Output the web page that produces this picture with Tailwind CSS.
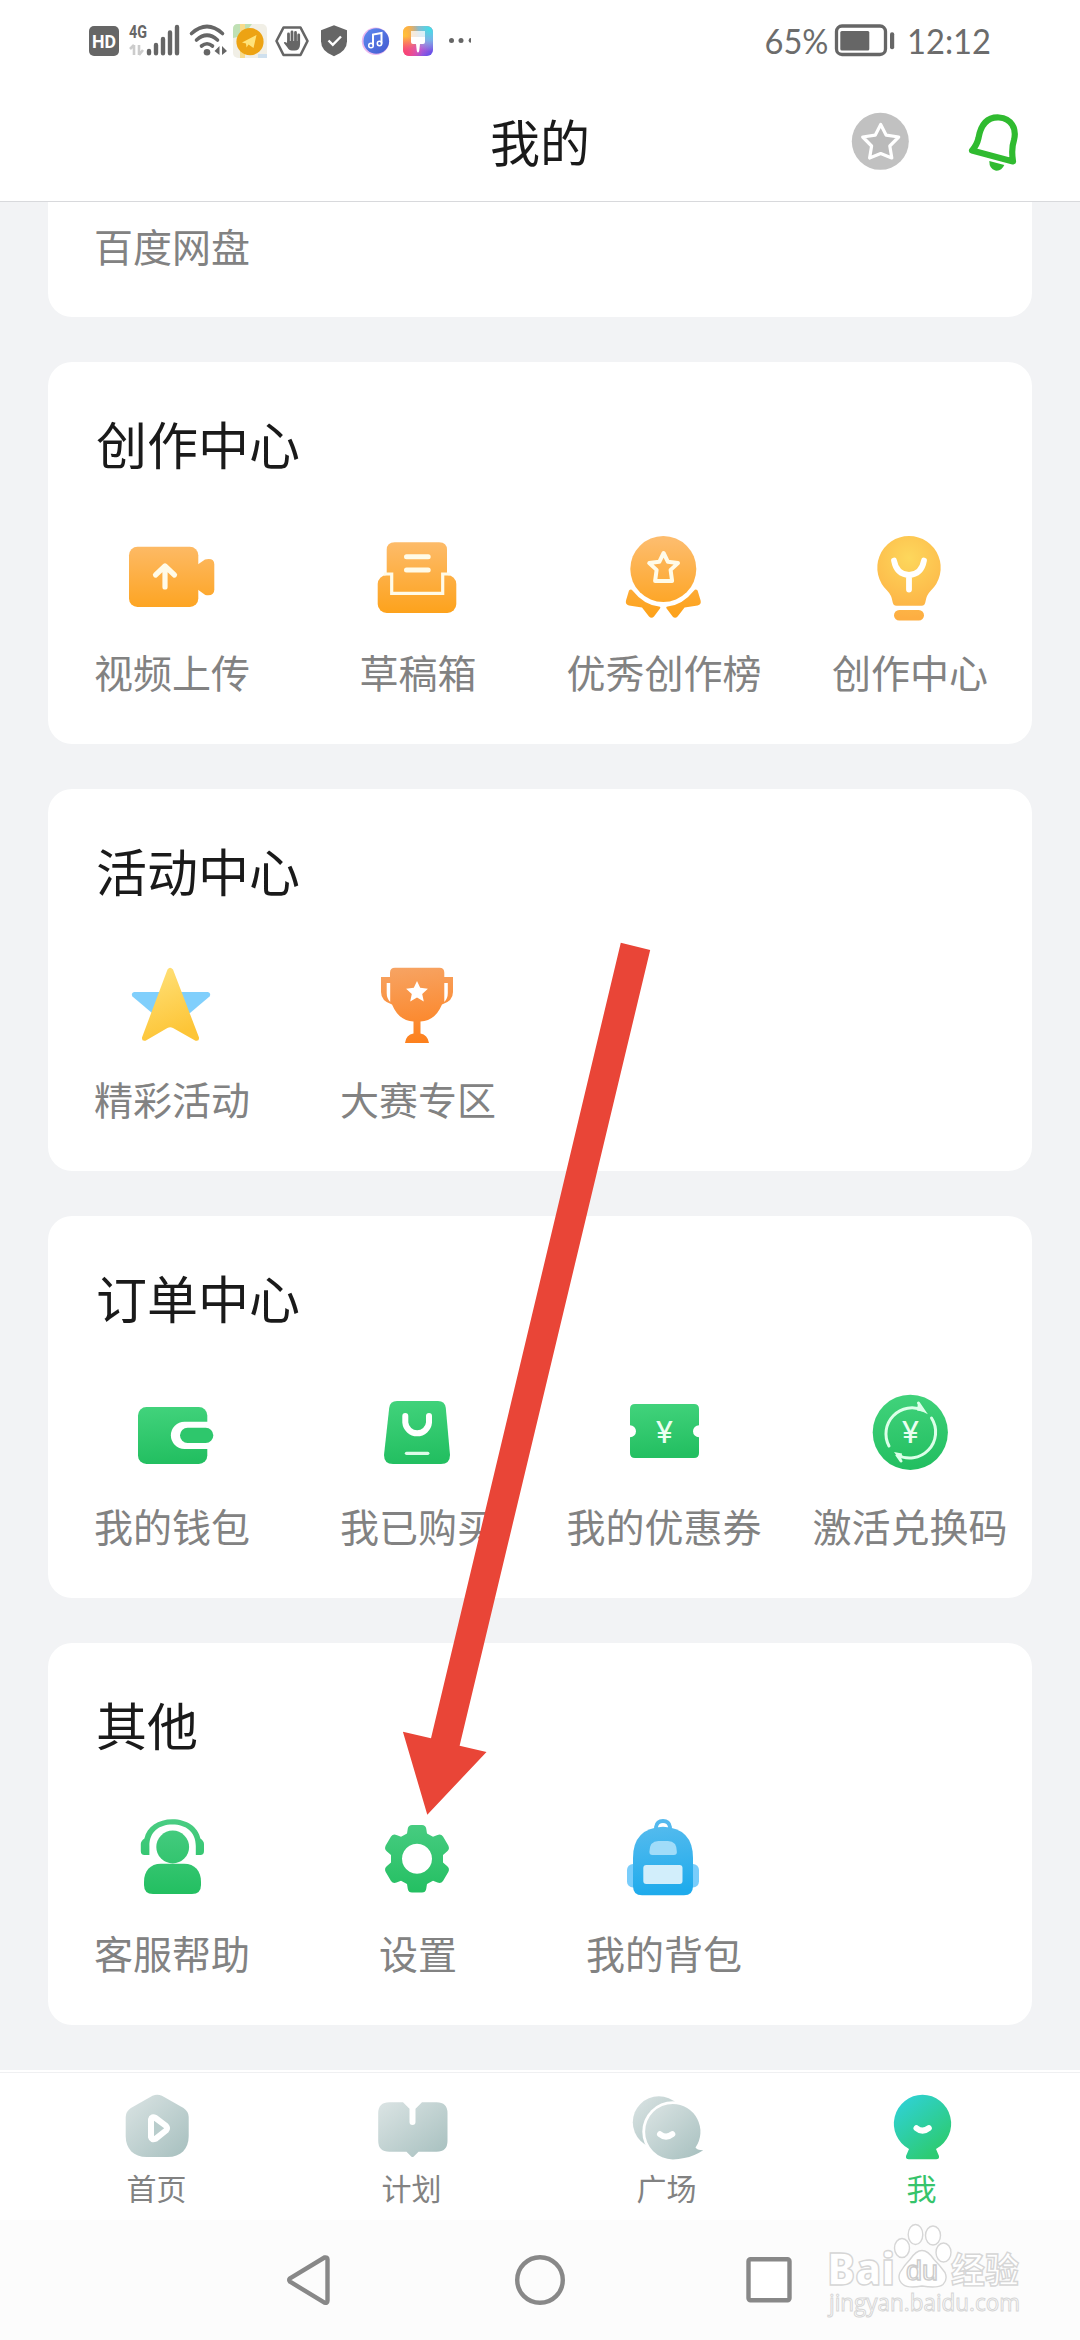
<!DOCTYPE html>
<html lang="zh-CN">
<head>
<meta charset="utf-8">
<title>我的</title>
<script src="https://cdn.jsdelivr.net/npm/@tailwindcss/browser@4"></script>
</head>
<body class="relative w-[1080px] h-[2340px] overflow-hidden bg-[#f2f3f5] flex flex-col font-['Noto_Sans_CJK_SC',sans-serif] text-[39px] text-[#828282]">

<svg class="absolute w-0 h-0">
  <defs>
    <linearGradient id="orangePage" gradientUnits="userSpaceOnUse" x1="0" y1="540" x2="0" y2="614"><stop offset="0" stop-color="#fdbc6c"/><stop offset="1" stop-color="#fda21b"/></linearGradient>
    <radialGradient id="bulb" gradientUnits="userSpaceOnUse" cx="909" cy="558" r="60"><stop offset="0" stop-color="#fdd75c"/><stop offset="1" stop-color="#fdae42"/></radialGradient>
    <linearGradient id="yellow" x1="0" y1="0" x2="0.3" y2="1"><stop offset="0" stop-color="#ffe27c"/><stop offset="1" stop-color="#fdc537"/></linearGradient>
    <linearGradient id="cup" gradientUnits="userSpaceOnUse" x1="410" y1="967" x2="420" y2="1043"><stop offset="0" stop-color="#f7a362"/><stop offset="1" stop-color="#fd801c"/></linearGradient>
    <linearGradient id="green" x1="0" y1="0" x2="0.1" y2="1"><stop offset="0" stop-color="#42d37c"/><stop offset="1" stop-color="#23bf61"/></linearGradient>
    <linearGradient id="greenPage" gradientUnits="userSpaceOnUse" x1="0" y1="1819" x2="0" y2="1894"><stop offset="0" stop-color="#4acd83"/><stop offset="1" stop-color="#23bf61"/></linearGradient>
    <linearGradient id="blue" x1="0" y1="0" x2="0.1" y2="1"><stop offset="0" stop-color="#55bbee"/><stop offset="1" stop-color="#1fabec"/></linearGradient>
    <linearGradient id="mist" x1="0" y1="0" x2="1" y2="1"><stop offset="0" stop-color="#dbe4e4"/><stop offset="1" stop-color="#a6bfbe"/></linearGradient>
    <linearGradient id="me" gradientUnits="userSpaceOnUse" x1="900" y1="2103" x2="938" y2="2150"><stop offset="0" stop-color="#2fd1d0"/><stop offset="1" stop-color="#2dcb73"/></linearGradient>
    <linearGradient id="rainbow" x1="0" y1="0" x2="1" y2="1"><stop offset="0" stop-color="#ffb03a"/><stop offset="0.35" stop-color="#f8806a"/><stop offset="0.65" stop-color="#c95ad0"/><stop offset="1" stop-color="#4c50f0"/></linearGradient>
    <radialGradient id="cyanGlow" cx="0.9" cy="0.1" r="0.75"><stop offset="0" stop-color="#3fe0e8"/><stop offset="0.5" stop-color="#62cff0" stop-opacity="0.75"/><stop offset="1" stop-color="#62cff0" stop-opacity="0"/></radialGradient>
    <radialGradient id="goldGlow" cx="0.05" cy="0.3" r="0.5"><stop offset="0" stop-color="#ffc23a"/><stop offset="1" stop-color="#ffc23a" stop-opacity="0"/></radialGradient>
    <radialGradient id="pinkGlow" cx="0.05" cy="0.95" r="0.6"><stop offset="0" stop-color="#fb3f72"/><stop offset="1" stop-color="#fb3f72" stop-opacity="0"/></radialGradient>
    <linearGradient id="music" x1="0" y1="0" x2="1" y2="1"><stop offset="0" stop-color="#5f8cf0"/><stop offset="1" stop-color="#4359cf"/></linearGradient>
  </defs>
</svg>

<header class="h-[202px] shrink-0 bg-white border-b border-[#d8d9dc] flex flex-col">
  <div class="h-[84px] flex">
    <svg class="block w-[540px] h-[84px]" viewBox="0 0 540 84">
      <rect x="89" y="26" width="30" height="30" rx="5" fill="#666"/>
      <text x="92" y="48" font-family="Roboto" font-weight="700" font-size="19" textLength="24" lengthAdjust="spacingAndGlyphs" fill="#fff">HD</text>
      <text x="129" y="38" font-family="Roboto" font-weight="700" font-size="18" textLength="18" lengthAdjust="spacingAndGlyphs" fill="#666">4G</text>
      <path d="M134 45v10M130 49l4-4M139 55V45M143 50l-4 5" stroke="#ccc" stroke-width="2.6" fill="none"/>
      <path d="M149 51v2.3M156 45v8.3M163 39v14.3M170 32.500v20.800M177 27v26.300" stroke="#666" stroke-width="4.400" stroke-linecap="round"/>
      <circle cx="207" cy="52.300" r="3.300" fill="#666"/>
      <path d="M191.500 33.500Q207 19.500 222.500 33.500M196.500 40Q207 30.500 217.500 40M201.500 46Q207 41.500 212.500 46" stroke="#666" stroke-width="3.600" stroke-linecap="round" fill="none"/>
      <path d="M219.500 46v9l-5-4zM222 46v9l5-4z" fill="#666"/>
      <rect x="233" y="24" width="34" height="34" rx="5" fill="#f1efe6"/>
      <path d="M233 29q0-5 5-5h14l-9 12-10 2z" fill="#bfe0b4"/>
      <path d="M240 24h5v34h-5z" fill="#f8dc8c"/><path d="M258 54h9v4h-9z" fill="#cfe0ee"/>
      <circle cx="250" cy="41.700" r="13.600" fill="#eda313"/>
      <path d="M242 42.500l14.500-7.500-3 13-5-3.500-2 3-.5-4z" fill="#ffe37a"/>
      <path d="M283.500 27.500h17l7 13.500-7 14h-17l-7-14z" fill="#fff" stroke="#666" stroke-width="2.600" stroke-linejoin="round"/>
      <path d="M288.500 34v8M292 32v10M295.500 32.500v9M298.700 35v9" stroke="#666" stroke-width="2.800" stroke-linecap="round"/>
      <path d="M287.200 41h12.700v5q-1 4.500-5 4.500h-3q-3 0-4.500-3l-3.500-4.500q0-2 3.300 0z" fill="#666"/>
      <path d="M334 25.300l13 5v11q0 10-13 15-13-5-13-15v-11z" fill="#666"/>
      <path d="M328.500 40.500l4.300 4.300 8.200-8.300" stroke="#fff" stroke-width="2.400" fill="none"/>
      <circle cx="375.500" cy="41.300" r="13.700" fill="#ebb8ee"/>
      <circle cx="376.300" cy="41" r="12.800" fill="url(#music)"/>
      <path d="M373 45.500V34.500l8.500-1.500v10.500" stroke="#fff" stroke-width="2" fill="none"/><circle cx="371" cy="45.500" r="2.300" fill="none" stroke="#fff" stroke-width="1.500"/><circle cx="379.500" cy="43.500" r="2.200" fill="none" stroke="#fff" stroke-width="1.500"/>
      <rect x="403" y="26" width="30" height="30" rx="6" fill="url(#rainbow)"/><rect x="403" y="26" width="30" height="30" rx="6" fill="url(#cyanGlow)"/><rect x="403" y="26" width="30" height="30" rx="6" fill="url(#goldGlow)"/><rect x="403" y="26" width="30" height="30" rx="6" fill="url(#pinkGlow)"/>
      <path d="M411 31h14v6h-14z" fill="#fff" opacity=".75"/><path d="M411 37h14v5q0 2-2 2h-3l-.8 7q-1.200 3-2.400 0l-.8-7h-3q-2 0-2-2z" fill="#fff"/>
      <circle cx="451.500" cy="40.400" r="2.500" fill="#666"/><circle cx="461" cy="40.400" r="2.500" fill="#666"/><path d="M471 38a2.400 2.400 0 0 0 0 4.800z" fill="#666"/>
    </svg>
    <svg class="block w-[540px] h-[84px]" viewBox="540 0 540 84">
      <text x="764.500" y="54" font-family="Lato" font-size="34.500" textLength="64" lengthAdjust="spacingAndGlyphs" fill="#6c6c6c">65%</text>
      <rect x="836.500" y="26" width="49" height="28.500" rx="5.500" fill="none" stroke="#666" stroke-width="3.300"/>
      <rect x="840.300" y="31" width="29" height="19.500" rx="1.500" fill="#666"/>
      <rect x="890" y="32.300" width="4.200" height="17" rx="2" fill="#666"/>
      <text x="907" y="54" font-family="Lato" font-size="34.500" textLength="84" lengthAdjust="spacingAndGlyphs" fill="#6c6c6c">12:12</text>
    </svg>
  </div>
  <div class="h-[117px] grid grid-cols-[390px_300px_390px] items-center">
    <span></span>
    <h1 class="text-center text-[50px] leading-[60px] pb-[5px] text-[#1a1a1a]">我的</h1>
    <svg class="block w-[390px] h-[117px]" viewBox="690 84 390 117">
      <circle cx="880.300" cy="141.300" r="28.500" fill="#c1c1c1"/>
      <path d="M880.700 124.500l5.500 10.700 12.500 1.800-8.900 9 2 12-11.100-4.500-11.100 4.500 2-12-8.900-9 12.500-1.800z" fill="#bababa" stroke="#fff" stroke-width="3.200" stroke-linejoin="round"/>
      <path d="M972 150.500Q977 145 978.500 138C981 124 988 117 999 117.500 1011 118.500 1017 128 1014 140Q1011 149 1013 161.500z" fill="none" stroke="#30bb30" stroke-width="6.200" stroke-linejoin="round"/>
      <path d="M989.300 161l15 4q-3 6.500-9 5.500-6-1.500-6-9.500z" fill="#30bb30"/>
    </svg>
  </div>
</header>

<main class="h-[1868px] shrink-0 px-12 flex flex-col gap-[45px]">
  <section class="h-[115px] shrink-0 bg-white rounded-b-3xl grid grid-cols-4">
    <span class="text-center pt-[14px] pl-[2px] leading-[58px]">百度网盘</span>
  </section>

  <section class="h-[382px] shrink-0 bg-white rounded-3xl flex flex-col pt-[46px]">
    <h2 class="pl-[48px] text-[51px] leading-[70px] text-[#1a1a1a]">创作中心</h2>
    <div class="grid grid-cols-4 pt-[52px]">
      <div class="flex flex-col items-center gap-[16px]">
        <svg class="w-24 h-24 overflow-visible" viewBox="123 530 96 96"><g fill="url(#orangePage)"><rect x="129" y="546.700" width="69.300" height="60.300" rx="8.500"/><path d="M197 565l8-5.500q9.300-2 9.300 5v25q0 7-9 5.500l-8.300-6z"/></g><path d="M165 587v-21M155.500 575l9.500-9 9.500 9" stroke="#fffbe8" stroke-width="5.200" fill="none" stroke-linecap="round" stroke-linejoin="round"/></svg>
        <span class="whitespace-nowrap pl-[2px] leading-[58px]">视频上传</span>
      </div>
      <div class="flex flex-col items-center gap-[16px]">
        <svg class="w-24 h-24 overflow-visible" viewBox="369 530 96 96"><g fill="url(#orangePage)"><rect x="377.700" y="575" width="78.600" height="38" rx="9"/><path d="M386.700 550q0-7.700 8-7.700h44.500q7.800 0 7.800 7.700v43h-60.300z"/></g><path d="M384 574h7.700v19.300h51V574h7" stroke="#fffbe8" stroke-width="3.200" fill="none"/><path d="M406.500 556.700h21.700M406.500 570h21.700" stroke="#fffbe8" stroke-width="5" stroke-linecap="round"/></svg>
        <span class="whitespace-nowrap pl-[2px] leading-[58px]">草稿箱</span>
      </div>
      <div class="flex flex-col items-center gap-[16px]">
        <svg class="w-24 h-24 overflow-visible" viewBox="615 530 96 96"><g fill="url(#orangePage)"><circle cx="663.300" cy="569" r="33"/><path d="M629 590.500q2-2 3.500 0Q644 605 659 606.500q2 0 1 2l-6 8q-2.500 2.500-5 0l-7-9-13-2q-4-1-3-5z"/><path d="M697.600 590.500q-2-2-3.500 0-11.500 14.500-26.500 16-2 0-1 2l6 8q2.500 2.500 5 0l7-9 13-2q4-1 3-5z"/></g><path d="M663.600 553l4.300 8.800 10.100 1.300-7.400 6.800 1.500 11.200h-17l1.500-11.200-7.400-6.800 10.100-1.300z" fill="none" stroke="#fffbe8" stroke-width="4" stroke-linejoin="round"/></svg>
        <span class="whitespace-nowrap pl-[2px] leading-[58px]">优秀创作榜</span>
      </div>
      <div class="flex flex-col items-center gap-[16px]">
        <svg class="w-24 h-24 overflow-visible" viewBox="861 530 96 96"><g fill="url(#bulb)"><path d="M909 536a31.700 31.700 0 0 1 21.500 55q-4 4-5 10.500-.5 4.200-4 4.200h-25q-3.500 0-4-4.200-1-6.500-5-10.500A31.700 31.700 0 0 1 909 536z"/><rect x="894" y="610" width="30" height="10.500" rx="5.200"/></g><path d="M894 560.500q2.500 14 15 14.500 12.500-.5 15-14.500M909 575v14.500" stroke="#fff" stroke-width="5.800" fill="none" stroke-linecap="round"/></svg>
        <span class="whitespace-nowrap pl-[2px] leading-[58px]">创作中心</span>
      </div>
    </div>
  </section>

  <section class="h-[382px] shrink-0 bg-white rounded-3xl flex flex-col pt-[46px]">
    <h2 class="pl-[48px] text-[51px] leading-[70px] text-[#1a1a1a]">活动中心</h2>
    <div class="grid grid-cols-4 pt-[52px]">
      <div class="flex flex-col items-center gap-[16px]">
        <svg class="w-24 h-24 overflow-visible" viewBox="123 957 96 96"><path d="M134 992h74q3.500 1.500 1.500 4.500L190 1013h-38l-19.500-16.500q-2-3 1.500-4.500z" fill="#80cffc"/><path d="M167.500 969.500q2.500-3.500 5.500 0L199 1037.500q.5 4-3.500 3.200L173 1028q-2.800-1.500-5.600 0L145.500 1040.700q-4 .8-3.500-3.200z" fill="url(#yellow)"/></svg>
        <span class="whitespace-nowrap pl-[2px] leading-[58px]">精彩活动</span>
      </div>
      <div class="flex flex-col items-center gap-[16px]">
        <svg class="w-24 h-24 overflow-visible" viewBox="369 957 96 96"><g fill="url(#cup)"><path d="M395 967.700h44.500q4.800 0 4.800 5v4.300h8.700v15q0 9-11 12.500-7 16.500-21.500 17v12q7 1 8.500 9.500h-24q1-8.500 8.500-9.500v-12q-14.500-.5-21.500-17-11-3.500-11-12.500v-15h9v-4.300q0-5 5-5z"/></g><path d="M386.700 983h3.500v19q-3.500-3.500-3.500-9zM447.800 983h-3.500v19q3.500-3.500 3.500-9z" fill="#fff"/><path d="M417 981l3.200 6.800 7.700.9-5.700 5.200 1.600 7.600-6.800-3.900-6.800 3.900 1.600-7.600-5.700-5.200 7.700-.9z" fill="#fff"/></svg>
        <span class="whitespace-nowrap pl-[2px] leading-[58px]">大赛专区</span>
      </div>
    </div>
  </section>

  <section class="h-[382px] shrink-0 bg-white rounded-3xl flex flex-col pt-[46px]">
    <h2 class="pl-[48px] text-[51px] leading-[70px] text-[#1a1a1a]">订单中心</h2>
    <div class="grid grid-cols-4 pt-[52px]">
      <div class="flex flex-col items-center gap-[16px]">
        <svg class="w-24 h-24 overflow-visible" viewBox="123 1384 96 96"><rect x="138" y="1407" width="69.300" height="57" rx="8.500" fill="url(#green)"/><path d="M208.500 1421.700H184.500a13.600 13.600 0 0 0 0 27.300h24z" fill="#fff"/><rect x="180" y="1427.700" width="33.300" height="15.300" rx="7.600" fill="#2ec76c"/></svg>
        <span class="whitespace-nowrap pl-[2px] leading-[58px]">我的钱包</span>
      </div>
      <div class="flex flex-col items-center gap-[16px]">
        <svg class="w-24 h-24 overflow-visible" viewBox="369 1384 96 96"><path d="M397 1401h41q7 0 7.800 7L450 1455q0 9-9 9h-48q-9 0-9-9l5.200-47q.8-7 7.800-7z" fill="url(#green)"/><path d="M405.300 1416v6.500a11.900 11.900 0 0 0 23.700 0V1416" stroke="#fff" stroke-width="6" fill="none" stroke-linecap="round"/><path d="M406.500 1453.300h21.300" stroke="#ddfbe9" stroke-width="3.300" stroke-linecap="round"/></svg>
        <span class="whitespace-nowrap pl-[2px] leading-[58px]">我已购买</span>
      </div>
      <div class="flex flex-col items-center gap-[16px]">
        <svg class="w-24 h-24 overflow-visible" viewBox="615 1384 96 96"><path d="M635 1404h59q5 0 5 5v16.300a6 6 0 0 0 0 12V1453q0 5-5 5h-59q-5 0-5-5v-15.700a6 6 0 0 0 0-12V1409q0-5 5-5z" fill="url(#green)"/><text x="664.500" y="1442.500" text-anchor="middle" font-family="Roboto" font-size="32" fill="#e9fff1">¥</text></svg>
        <span class="whitespace-nowrap pl-[2px] leading-[58px]">我的优惠券</span>
      </div>
      <div class="flex flex-col items-center gap-[16px]">
        <svg class="w-24 h-24 overflow-visible" viewBox="861 1384 96 96"><circle cx="910.300" cy="1432.300" r="37.600" fill="url(#green)"/><path d="M889 1446A26 26 0 0 1 923.500 1410.500L918.500 1403M931.500 1418A26 26 0 0 1 896.500 1454.500L901 1461" stroke="#dcffe9" stroke-width="3" fill="none" stroke-linecap="round"/><path d="M918 1402.500l7 9.500-8-1.500zM901 1461.500l-7-9.500 8 1.500z" fill="#dcffe9"/><text x="910.300" y="1442.500" text-anchor="middle" font-family="Roboto" font-size="32" fill="#e9fff1">¥</text></svg>
        <span class="whitespace-nowrap pl-[2px] leading-[58px]">激活兑换码</span>
      </div>
    </div>
  </section>

  <section class="h-[382px] shrink-0 bg-white rounded-3xl flex flex-col pt-[46px]">
    <h2 class="pl-[48px] text-[51px] leading-[70px] text-[#1a1a1a]">其他</h2>
    <div class="grid grid-cols-4 pt-[52px]">
      <div class="flex flex-col items-center gap-[16px]">
        <svg class="w-24 h-24 overflow-visible" viewBox="123 1811 96 96"><g fill="url(#greenPage)"><circle cx="172.700" cy="1847" r="16.400"/><path d="M144 1882c0-11 6-18.300 17-18.300h23c11 0 17 7.300 17 18.300v3q0 9-9 9h-39q-9 0-9-9z"/><path d="M149.400 1855h-5q-3.600 0-3.600-4v-7q0-3 3.600-5.500C147 1827 158 1819.300 172.400 1819.300S198 1827 200.400 1838.500q3.600 2.500 3.600 5.500v7q0 4-3.600 4h-4.600v-9C195.800 1832 186 1824.500 172.400 1824.500S149.400 1832 149.400 1846z"/></g></svg>
        <span class="whitespace-nowrap pl-[2px] leading-[58px]">客服帮助</span>
      </div>
      <div class="flex flex-col items-center gap-[16px]">
        <svg class="w-24 h-24 overflow-visible" viewBox="369 1811 96 96">
          <g fill="url(#greenPage)"><path fill-rule="evenodd" d="M412 1825h10q3.500 0 4.200 3.500l.8 5 6 3.300 4.500-1.800q3.500-1.300 5.500 1.500l5.300 9q1.700 3.500-1 5.800l-4.300 3.700v7.500l4.300 3.700q2.700 2.300 1 5.800l-5.300 9q-2 2.800-5.500 1.500l-4.500-1.800-6 3.300-.8 5q-.7 3.500-4.200 3.500h-10q-3.500 0-4.200-3.500l-.8-5-6-3.300-4.500 1.800q-3.500 1.300-5.500-1.500l-5.300-9q-1.700-3.500 1-5.800l4.300-3.700V1855l-4.300-3.700q-2.700-2.300-1-5.800l5.300-9q2-2.800 5.500-1.500l4.500 1.800 6-3.300.8-5q.7-3.500 4.200-3.500zM417 1843.700a15 15 0 1 0 .01 0z"/></g></svg>
        <span class="whitespace-nowrap pl-[2px] leading-[58px]">设置</span>
      </div>
      <div class="flex flex-col items-center gap-[16px]">
        <svg class="w-24 h-24 overflow-visible" viewBox="615 1811 96 96"><rect x="627" y="1864" width="72" height="23.500" rx="6" fill="#79cdfb"/><path d="M656 1830v-3q1-6 7-6t7 6v3" fill="none" stroke="#54b9ee" stroke-width="3.800"/><path d="M633 1858q0-30 30-31.300 30 1.300 30 31.300v28q0 9.300-9 9.300h-42q-9 0-9-9.300z" fill="url(#blue)"/><path d="M649.400 1852q0-11 9-11h9.500q9 0 9 11 0 3-3 3h-21.500q-3 0-3-3z" fill="#a1dcf9"/><rect x="643.300" y="1865" width="39.200" height="19" rx="3" fill="#d2eefb"/></svg>
        <span class="whitespace-nowrap pl-[2px] leading-[58px]">我的背包</span>
      </div>
    </div>
  </section>
</main>

<nav class="h-[150px] shrink-0 bg-white pt-[2px] text-[30px]">
  <div class="border-t border-[#eff0f2] pl-[29px] pr-[31px] grid grid-cols-4 pt-[13px]">
    <div class="flex flex-col items-center">
      <svg class="w-20 h-20" viewBox="117 2086 80 80"><path d="M152.500 2095.700q4.700-2 9.400 0L183.500 2108q5.200 3.500 5.200 9v19c0 13-8 21-21 21h-21c-13 0-21-8-21-21v-19q0-5.500 5.200-9z" fill="url(#mist)"/><path d="M151 2119.500v17.500q.8 3.500 4.500 1.800L166 2130.500q2-2.300 0-4.600L155.500 2118q-3.700-2-4.500 1.500z" fill="#b9cdcc" stroke="#fff" stroke-width="6" stroke-linejoin="round"/></svg>
      <span class="-mt-px leading-[45px]">首页</span>
    </div>
    <div class="flex flex-col items-center">
      <svg class="w-20 h-20" viewBox="371.500 2086 80 80"><path d="M389 2102.300h13.500l6.500 6.500V2122a3 3 0 0 0 6 0v-13.200l6.500-6.500H436q11 0 11 11v27.400q0 11-11 11h-18l-5 5q-1 .7-2 0l-5-5h-17q-11.300 0-11.300-11v-27.400q0-11 11.300-11z" fill="url(#mist)"/></svg>
      <span class="-mt-px leading-[45px]">计划</span>
    </div>
    <div class="flex flex-col items-center">
      <svg class="w-20 h-20" viewBox="626.500 2086 80 80"><circle cx="658.300" cy="2122.300" r="26" fill="url(#mist)"/><circle cx="672.300" cy="2131.700" r="30.500" fill="#fff"/><path d="M672.300 2104a27.700 27.700 0 0 1 22.700 43.500q1 2.500 7.700 2.700-9 6-19 7.800-5.500 1.400-11.400 1.400a27.700 27.700 0 0 1 0-55.400z" fill="url(#mist)"/><path d="M659.500 2134.200q6 5 12.300 0" stroke="#fff" stroke-width="6" fill="none" stroke-linecap="round"/></svg>
      <span class="-mt-px leading-[45px]">广场</span>
    </div>
    <div class="flex flex-col items-center text-[#36c46b]">
      <svg class="w-20 h-20" viewBox="881.500 2086 80 80"><path d="M922 2094.700a28.900 28.900 0 0 1 13.500 54.300l3 7q.5 3.300-2.800 3.300h-27.400q-3.300 0-2.800-3.300l3-7a28.900 28.900 0 0 1 13.500-54.300z" fill="url(#me)"/><path d="M916 2128.200q6 5 12.300 0" stroke="#fff" stroke-width="6" fill="none" stroke-linecap="round"/></svg>
      <span class="-mt-px leading-[45px]">我</span>
    </div>
  </div>
</nav>

<footer class="h-[120px] shrink-0 bg-[#fcfcfc]">
  <svg class="block w-[1080px] h-[120px]" viewBox="0 2220 1080 120">
    <g fill="none" stroke="#888" stroke-width="4.400" stroke-linejoin="round"><path d="M290 2278.300L324.500 2257.500q3-.7 3 1.800v41.500q0 2.500-3 1.800L290 2281.700q-1.500-1.700 0-3.400z"/><circle cx="540" cy="2280" r="22.800"/><rect x="748.500" y="2259.300" width="41" height="41" rx="2" fill="#fff"/></g>
  </svg>
</footer>

<svg class="absolute left-[820px] top-[2215px] w-[220px] h-[110px]" viewBox="820 2215 220 110">
  <g fill="#fff" stroke="#d6d6d6" stroke-width="1.400">
    <text x="827" y="2285" font-family="Open Sans" font-weight="800" font-size="45" textLength="68" lengthAdjust="spacingAndGlyphs">Bai</text>
    <ellipse cx="902" cy="2248" rx="7.500" ry="9.500"/><ellipse cx="915.500" cy="2234.500" rx="7.300" ry="10"/><ellipse cx="933" cy="2235.500" rx="7.500" ry="9.500"/><ellipse cx="943.500" cy="2252.500" rx="7.500" ry="9.500"/>
    <path d="M922 2250.500q6 0 12 9 6 6 11 13 3 7-2 12-5 4-21 1.500-14 2.500-19-1.500-6-5-3-12 4-7 10-13 6-9 12-9z"/>
    <text x="906" y="2280" font-family="Liberation Sans" font-size="27" textLength="32" lengthAdjust="spacingAndGlyphs" stroke="#ccc">du</text>
    <text x="951" y="2283" font-family="Noto Sans CJK SC" font-weight="700" font-size="35" textLength="68" lengthAdjust="spacingAndGlyphs">经验</text>
    <text x="829" y="2310.500" font-family="Open Sans" font-size="23.500" textLength="191" lengthAdjust="spacingAndGlyphs" stroke-width="1">jingyan.baidu.com</text>
  </g>
</svg>

<svg class="absolute left-[390px] top-[930px] w-[280px] h-[900px]" viewBox="390 930 280 900"><path d="M620.800 942.700L650.200 950 459.600 1745.700 486.500 1752 427.300 1814.700 402.900 1731.700 431 1738.300z" fill="#e94537"/></svg>
</body>
</html>
